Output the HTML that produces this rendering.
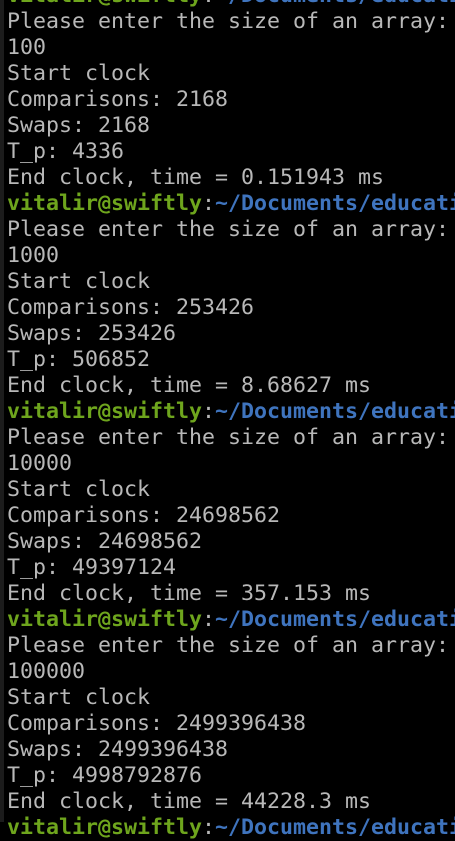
<!DOCTYPE html>
<html><head><style>
html,body{margin:0;padding:0;background:#000;}
body{width:455px;height:822px;overflow:hidden;position:relative;}
.strip{position:absolute;left:0;top:0;width:4px;height:822px;background:#1c1c1c;}
pre{position:absolute;left:7px;top:-17px;margin:0;font-family:"DejaVu Sans Mono","Liberation Mono",monospace;font-size:21.6px;line-height:26px;color:#b8b8b8;white-space:pre;}
.g{color:#6ea51d;font-weight:bold}
.b{color:#3f74be;font-weight:bold}
.w{color:#b8b8b8}
</style></head><body><div class="strip"></div>
<pre><span class="g">vitalir@swiftly</span><span class="w">:</span><span class="b">~/Documents/educati</span>
Please enter the size of an array:
100
Start clock
Comparisons: 2168
Swaps: 2168
T_p: 4336
End clock, time = 0.151943 ms
<span class="g">vitalir@swiftly</span><span class="w">:</span><span class="b">~/Documents/educati</span>
Please enter the size of an array:
1000
Start clock
Comparisons: 253426
Swaps: 253426
T_p: 506852
End clock, time = 8.68627 ms
<span class="g">vitalir@swiftly</span><span class="w">:</span><span class="b">~/Documents/educati</span>
Please enter the size of an array:
10000
Start clock
Comparisons: 24698562
Swaps: 24698562
T_p: 49397124
End clock, time = 357.153 ms
<span class="g">vitalir@swiftly</span><span class="w">:</span><span class="b">~/Documents/educati</span>
Please enter the size of an array:
100000
Start clock
Comparisons: 2499396438
Swaps: 2499396438
T_p: 4998792876
End clock, time = 44228.3 ms
<span class="g">vitalir@swiftly</span><span class="w">:</span><span class="b">~/Documents/educati</span></pre>
</body></html>
